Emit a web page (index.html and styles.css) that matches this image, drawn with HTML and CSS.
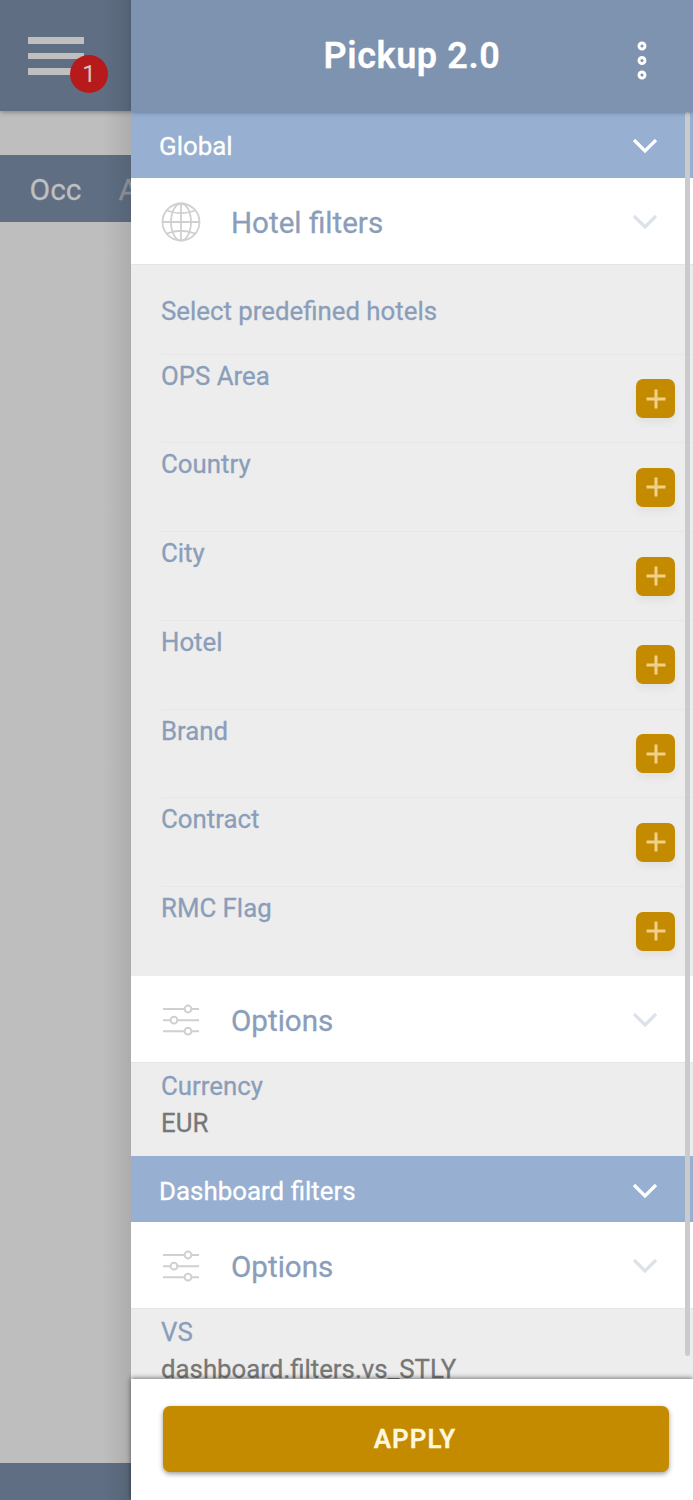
FILE: index.html
```html
<!DOCTYPE html>
<html lang="en">
<head>
<meta charset="utf-8">
<title>Pickup 2.0</title>
<link rel="stylesheet" href="styles.css">
</head>
<body>
<svg class="defs" width="0" height="0" aria-hidden="true">
  <symbol id="chevron" viewBox="0 0 26 16"><path d="M2 2 13 13 24 2" fill="none" stroke="currentColor" stroke-width="3.200"/></symbol>
  <symbol id="sliders" viewBox="0 0 40 40"><g fill="none" stroke="currentColor" stroke-width="2"><path d="M2 9H23.500M30.500 9H38M2 20.200H9.500M16.500 20.200H38M2 31.200H23.500M30.500 31.200H38"/><circle cx="27" cy="9" r="3.400"/><circle cx="13" cy="20.200" r="3.400"/><circle cx="27" cy="31.200" r="3.400"/></g></symbol>
  <symbol id="globe" viewBox="0 0 40 40"><g fill="none" stroke="currentColor" stroke-width="1.800"><circle cx="20" cy="20" r="18.500"/><ellipse cx="20" cy="20" rx="10" ry="18.500"/><path d="M20 1.500V38.500M1.500 20H38.500M6 8.500Q20 14 34 8.500M6 31.500Q20 26 34 31.500"/></g></symbol>
  <symbol id="plus" viewBox="0 0 20 20"><path d="M.5 10H19.500M10 .5V19.500" fill="none" stroke="currentColor" stroke-width="3"/></symbol>
</svg>
<div class="screen">
  <div class="page">
    <div class="page-top">
      <div class="burger"><i></i><i></i><i></i><span class="badge">1</span></div>
    </div>
    <div class="page-tabs"><span class="t-occ">Occ</span><span class="t-adr">A</span></div>
    <div class="page-foot"></div>
  </div>
  <aside class="drawer">
    <header class="head">
      <h1 class="title">Pickup 2.0</h1>
      <svg class="dots" viewBox="0 0 12 42"><g fill="none" stroke="currentColor" stroke-width="2.900"><circle cx="6" cy="6" r="3"/><circle cx="6" cy="20.500" r="3"/><circle cx="6" cy="35" r="3"/></g></svg>
    </header>
    <main class="list">
      <div class="band"><span>Global</span><svg class="chev"><use href="#chevron"/></svg></div>
      <div class="section"><svg class="icon"><use href="#globe"/></svg><span>Hotel filters</span><svg class="chev"><use href="#chevron"/></svg></div>
      <div class="filters">
        <div class="filter first"><span>Select predefined hotels</span></div>
        <div class="filter"><span>OPS Area</span><button class="add"><svg><use href="#plus"/></svg></button></div>
        <div class="filter"><span>Country</span><button class="add"><svg><use href="#plus"/></svg></button></div>
        <div class="filter"><span>City</span><button class="add"><svg><use href="#plus"/></svg></button></div>
        <div class="filter"><span>Hotel</span><button class="add"><svg><use href="#plus"/></svg></button></div>
        <div class="filter"><span>Brand</span><button class="add"><svg><use href="#plus"/></svg></button></div>
        <div class="filter"><span>Contract</span><button class="add"><svg><use href="#plus"/></svg></button></div>
        <div class="filter"><span>RMC Flag</span><button class="add"><svg><use href="#plus"/></svg></button></div>
      </div>
      <div class="section"><svg class="icon"><use href="#sliders"/></svg><span>Options</span><svg class="chev"><use href="#chevron"/></svg></div>
      <div class="choice"><span>Currency</span><span class="value">EUR</span></div>
      <div class="band second"><span>Dashboard filters</span><svg class="chev"><use href="#chevron"/></svg></div>
      <div class="section"><svg class="icon"><use href="#sliders"/></svg><span>Options</span><svg class="chev"><use href="#chevron"/></svg></div>
      <div class="choice"><span>VS</span><span class="value">dashboard.filters.vs_STLY</span></div>
      <div class="scrollbar"></div>
    </main>
    <footer class="foot"><button class="apply">APPLY</button></footer>
  </aside>
</div>
</body>
</html>
```
FILE: styles.css
```css
* { box-sizing: border-box; }
body { margin: 0; font-family: Roboto, "Liberation Sans", sans-serif; -webkit-text-stroke: .3px currentColor; }
button { border: 0; padding: 0; font-family: inherit; }
.defs { display: none; }
.screen { display: grid; grid-template-columns: 131px 562px; height: 1500px; overflow: hidden; }

.page { position: relative; display: flex; flex-direction: column; overflow: hidden; background: #bebebe; }
.page::after { content: ""; position: absolute; inset: 0 0 0 auto; width: 28px; background: linear-gradient(90deg, transparent, rgba(0,0,0,.09)); }
.page-top { height: 111px; padding: 37px 0 0 28px; background: #5f6e83; box-shadow: 0 1px 5px rgba(0,0,0,.35); }
.burger { position: relative; display: flex; flex-direction: column; gap: 9px; width: 56px; }
.burger i { height: 6.500px; background: #bfbfbf; }
.badge { position: absolute; left: 42px; top: 18px; width: 38px; height: 38px; border-radius: 50%; background: #b71a1b; color: #d5c5c5; font-size: 24px; line-height: 38px; text-align: center; -webkit-text-stroke: 0; }
.page-tabs { display: flex; gap: 37px; height: 67px; margin-top: 44px; padding-left: 29.500px; background: #5f6e83; color: #bfbfbf; font-size: 30px; line-height: 69px; }
.t-adr { opacity: .5; }
.page-foot { height: 37px; margin-top: auto; background: #5f6e83; }

.drawer { display: flex; flex-direction: column; min-height: 0; background: #fff; }
.head { position: relative; z-index: 1; display: flex; align-items: center; justify-content: center; height: 112px; background: #7e93af; color: #fff; box-shadow: 0 1px 4px rgba(40,60,90,.4); }
.title { margin: 0; font-size: 36px; font-weight: 600; letter-spacing: .6px; line-height: 112px; }
.dots { position: absolute; right: 45px; top: 40px; width: 12px; height: 42px; }

.list { position: relative; flex: 1; min-height: 0; overflow: hidden; }
.band { display: flex; align-items: center; justify-content: space-between; height: 66px; padding: 2px 35px 0 28px; background: #97afd0; color: #fff; font-size: 25.900px; }
.band.second { padding-top: 3px; }
.chev { width: 26px; height: 16px; margin-left: auto; }
.section { display: flex; align-items: center; height: 87px; padding: 2px 35px 0 30px; border-bottom: 1px solid #e5e5e5; background: #fff; color: #8a9eba; font-size: 29.600px; }
.section span { padding-top: 2px; }
.section .chev { color: #dce2ea; }
.icon { width: 40px; height: 40px; margin-right: 30px; color: #d0d0d0; }
.filters { height: 711px; padding-left: 30px; background: #ededed; color: #8a9eba; font-size: 25.800px; }
.filter { display: flex; justify-content: space-between; height: 88.750px; padding: 7px 18.500px 0 0; border-top: 1px solid #e7e7e7; line-height: 29px; }
.filter.first { height: 88.500px; padding-top: 31px; border-top-color: transparent; }
.add { display: grid; place-items: center; width: 39px; height: 39px; margin-top: 17.500px; border-radius: 7px; background: #c48b00; color: #f0d08a; box-shadow: 0 5px 8px rgba(0,0,0,.05); }
.add svg { width: 20px; height: 20px; margin-left: 1px; }
.choice { display: flex; flex-direction: column; gap: 7px; height: 93px; padding: 8px 0 0 30px; background: #ededed; color: #8a9eba; font-size: 25.800px; line-height: 30px; }
.value { color: #777; }
.scrollbar { position: absolute; top: 0; right: 3px; width: 5px; height: 1244px; border-radius: 3px; background: #cbcbcb; }

.foot { position: relative; z-index: 1; height: 121px; padding: 27px 24px 0 32px; background: #fff; box-shadow: 0 -1px 5px rgba(0,0,0,.5); }
.apply { display: block; width: 506px; height: 66px; border-radius: 7px; background: #c48b00; color: #fff6df; font-size: 26px; font-weight: 600; letter-spacing: 1px; padding-right: 2px; box-shadow: 0 2px 5px rgba(0,0,0,.4); }
```
